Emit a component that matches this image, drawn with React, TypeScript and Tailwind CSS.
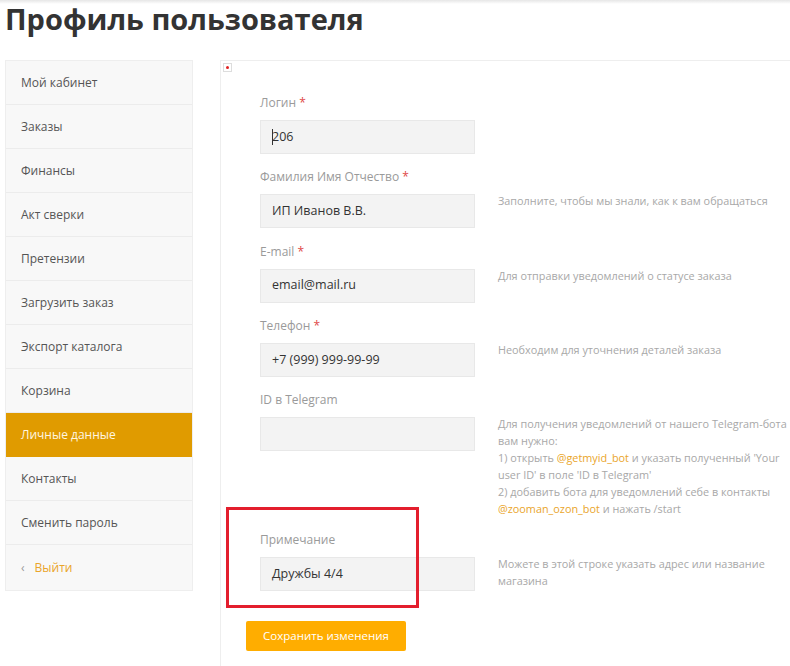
import React from "react";

const menu = [
  "Мой кабинет",
  "Заказы",
  "Финансы",
  "Акт сверки",
  "Претензии",
  "Загрузить заказ",
  "Экспорт каталога",
  "Корзина",
  "Личные данные",
  "Контакты",
  "Сменить пароль",
];

type Field = {
  label: string;
  required?: boolean;
  value: string;
  help?: React.ReactNode;
};

const link = "text-[#eaa52a]";

const fields: Field[] = [
  { label: "Логин", required: true, value: "206" },
  {
    label: "Фамилия Имя Отчество",
    required: true,
    value: "ИП Иванов В.В.",
    help: "Заполните, чтобы мы знали, как к вам обращаться",
  },
  {
    label: "E-mail",
    required: true,
    value: "email@mail.ru",
    help: "Для отправки уведомлений о статусе заказа",
  },
  {
    label: "Телефон",
    required: true,
    value: "+7 (999) 999-99-99",
    help: "Необходим для уточнения деталей заказа",
  },
  {
    label: "ID в Telegram",
    value: "",
    help: (
      <>
        <p>Для получения уведомлений от нашего Telegram-бота вам нужно:</p>
        <p>
          1) открыть <span className={link}>@getmyid_bot</span> и указать полученный 'Your user ID' в поле 'ID в Telegram'
        </p>
        <p>
          2) добавить бота для уведомлений себе в контакты <span className={link}>@zooman_ozon_bot</span> и нажать /start
        </p>
      </>
    ),
  },
  {
    label: "Примечание",
    value: "Дружбы 4/4",
    help: "Можете в этой строке указать адрес или название магазина",
  },
];

function FormRow({ f, first }: { f: Field; first?: boolean }) {
  return (
    <div className="flex mb-[13.3px]">
      <div className="w-[215px] shrink-0">
        <div className="h-[20px] leading-[20px] text-[12px] text-[#9a9a9a] mb-[7px]">
          {f.label}
          {f.required && <span className="text-[#e04848]"> *</span>}
        </div>
        <div className="h-[34px] bg-[#f3f3f3] border border-[#e8e8e8] flex items-center pl-[11px] text-[12.5px] text-[#333]">
          {first && <span className="w-px h-[16px] bg-[#333] mr-[-1px]" />}
          {f.value}
        </div>
      </div>
      {f.help && (
        <div className="ml-[23px] pt-[25px] w-[296px] text-[10.85px] leading-[17px] text-[#a8a8a8]">
          {f.help}
        </div>
      )}
    </div>
  );
}

export default function App() {
  return (
    <div
      className="relative w-[790px] h-[666px] overflow-hidden bg-white"
      style={{ fontFamily: "'Open Sans', 'Noto Sans', sans-serif" }}
    >
      <div className="h-[4px] bg-gradient-to-b from-[#e6e6e6] to-white" />
      <h1 className="pl-[5px] mt-[-5px] h-[61px] text-[29px] leading-[40px] font-bold text-[#333]">
        Профиль пользователя
      </h1>

      <div className="flex items-start">
        {/* side menu */}
        <nav className="ml-[5px] w-[188px] shrink-0 bg-[#f8f8f8] border border-[#eeeeee]">
          {menu.map((m) => {
            const active = m === "Личные данные";
            return (
              <div
                key={m}
                className={
                  active
                    ? "h-[44px] flex items-center pl-[15px] text-[12px] bg-[#e09b00] text-[#fff6e0] border-b border-[#e09b00]"
                    : "h-[44px] flex items-center pl-[15px] text-[12px] text-[#555] border-b border-[#ececec]"
                }
              >
                {m}
              </div>
            );
          })}
          <div className="h-[45px] flex items-center pl-[15px] text-[12px] text-[#eaa52a]">
            <span className="text-[#999] mr-[10px] text-[12px]">‹</span>
            Выйти
          </div>
        </nav>

        {/* profile form */}
        <main className="relative ml-[27px] flex-1 h-[610px] border-l border-t border-[#eeeeee]">
          <div className="absolute left-[2px] top-[2px] w-[9px] h-[9px] border border-[#dddddd] bg-white flex items-center justify-center">
            <div className="w-[3px] h-[3px] rounded-full bg-[#e02020]" />
          </div>
          <div className="pl-[39px] pt-[32px]">
            {fields.map((f, i) => (
              <FormRow key={f.label} f={f} first={i === 0} />
            ))}
            <button className="mt-[16px] ml-[-14px] w-[160px] h-[30px] bg-[#ffad00] rounded-[2px] text-white text-[11.5px]">
              Сохранить изменения
            </button>
          </div>
          {/* highlight frame around the note field */}
          <div className="absolute left-[5px] top-[446px] w-[193px] h-[101px] border-[3px] border-[#e31e2d]" />
        </main>
      </div>
    </div>
  );
}
